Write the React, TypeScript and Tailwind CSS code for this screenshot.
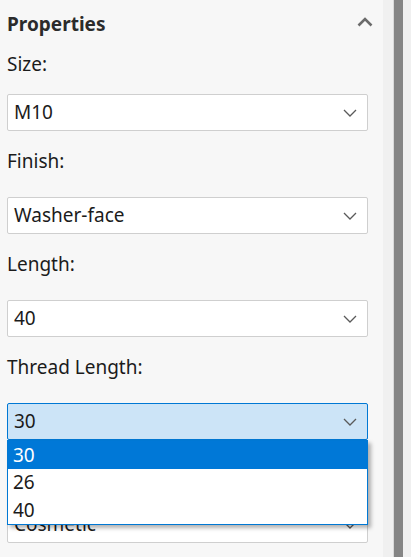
import { useState } from 'react';

type Field = {
  label: string;
  value: string;
};

// last row sits under the open list, so its label is not drawn
const fields: Field[] = [
  { label: 'Size:', value: 'M10' },
  { label: 'Finish:', value: 'Washer-face' },
  { label: 'Length:', value: '40' },
  { label: 'Thread Length:', value: '30' },
  { label: '', value: 'Cosmetic' },
];

const threadOptions = ['30', '26', '40'];

function ChevronDown() {
  return (
    <svg width="14" height="8" viewBox="0 0 14 8" fill="none" className="shrink-0">
      <path d="M1 1L7 7L13 1" stroke="#5a5a5a" strokeWidth="1.3" />
    </svg>
  );
}

function ChevronUp() {
  return (
    <svg width="16" height="10" viewBox="0 0 16 10" fill="none">
      <path d="M1.5 8.5L8 2L14.5 8.5" stroke="#6b6b6b" strokeWidth="2.6" />
    </svg>
  );
}

export default function App() {
  const [threadLength, setThreadLength] = useState('30');
  const [open, setOpen] = useState(true);

  return (
    <div
      className="flex w-[411px] h-[557px] overflow-hidden bg-[#f7f7f7] text-[#1b1b1b]"
      style={{ fontFamily: '"Noto Sans", "Open Sans", sans-serif' }}
    >
      <div className="w-[383px] shrink-0 px-[7px]">
        <div className="flex h-[34px] items-start justify-between pt-[11px]">
          <span className="text-[19px] leading-[26px] font-bold text-[#2b2b2b]">Properties</span>
          <span className="mr-[3px] mt-[6px]">
            <ChevronUp />
          </span>
        </div>

        {fields.map((field, i) => {
          const active = field.label === 'Thread Length:';
          return (
            <div key={field.value}>
              <div className={`${i === 0 ? 'h-[60px]' : 'h-[66px]'} pt-[17px]`}>
                <span className="text-[19px] leading-[26px]">{field.label}</span>
              </div>
              <div className="relative w-[361px]">
                <button
                  type="button"
                  onClick={() => active && setOpen(!open)}
                  className={`flex h-[37px] w-full items-center justify-between rounded-[2px] border pl-[6px] pr-[10px] text-[19px] ${
                    active ? 'border-[#0078d4] bg-[#cce4f7]' : 'border-[#cfcfcf] bg-white'
                  }`}
                >
                  <span>{active ? threadLength : field.value}</span>
                  <ChevronDown />
                </button>
                {active && open && (
                  <ul className="absolute left-0 top-[37px] z-10 w-full border border-[#0078d4] bg-white text-[19px] shadow-[3px_3px_4px_rgba(0,0,0,0.3)]">
                    {threadOptions.map((opt) => (
                      <li
                        key={opt}
                        onClick={() => {
                          setThreadLength(opt);
                          setOpen(false);
                        }}
                        className={`flex h-[27.5px] items-center pl-[5px] ${
                          opt === threadLength ? 'bg-[#0078d7] text-white' : ''
                        }`}
                      >
                        {opt}
                      </li>
                    ))}
                  </ul>
                )}
              </div>
            </div>
          );
        })}
      </div>

      <div className="w-[10px] shrink-0 bg-[#f0f0f0]" />
      <div className="w-[1px] shrink-0 bg-[#d9d9d9]" />
      <div className="w-[9px] shrink-0 bg-[#858585]" />
      <div className="flex-1 bg-[#f0f0f0]" />
    </div>
  );
}
